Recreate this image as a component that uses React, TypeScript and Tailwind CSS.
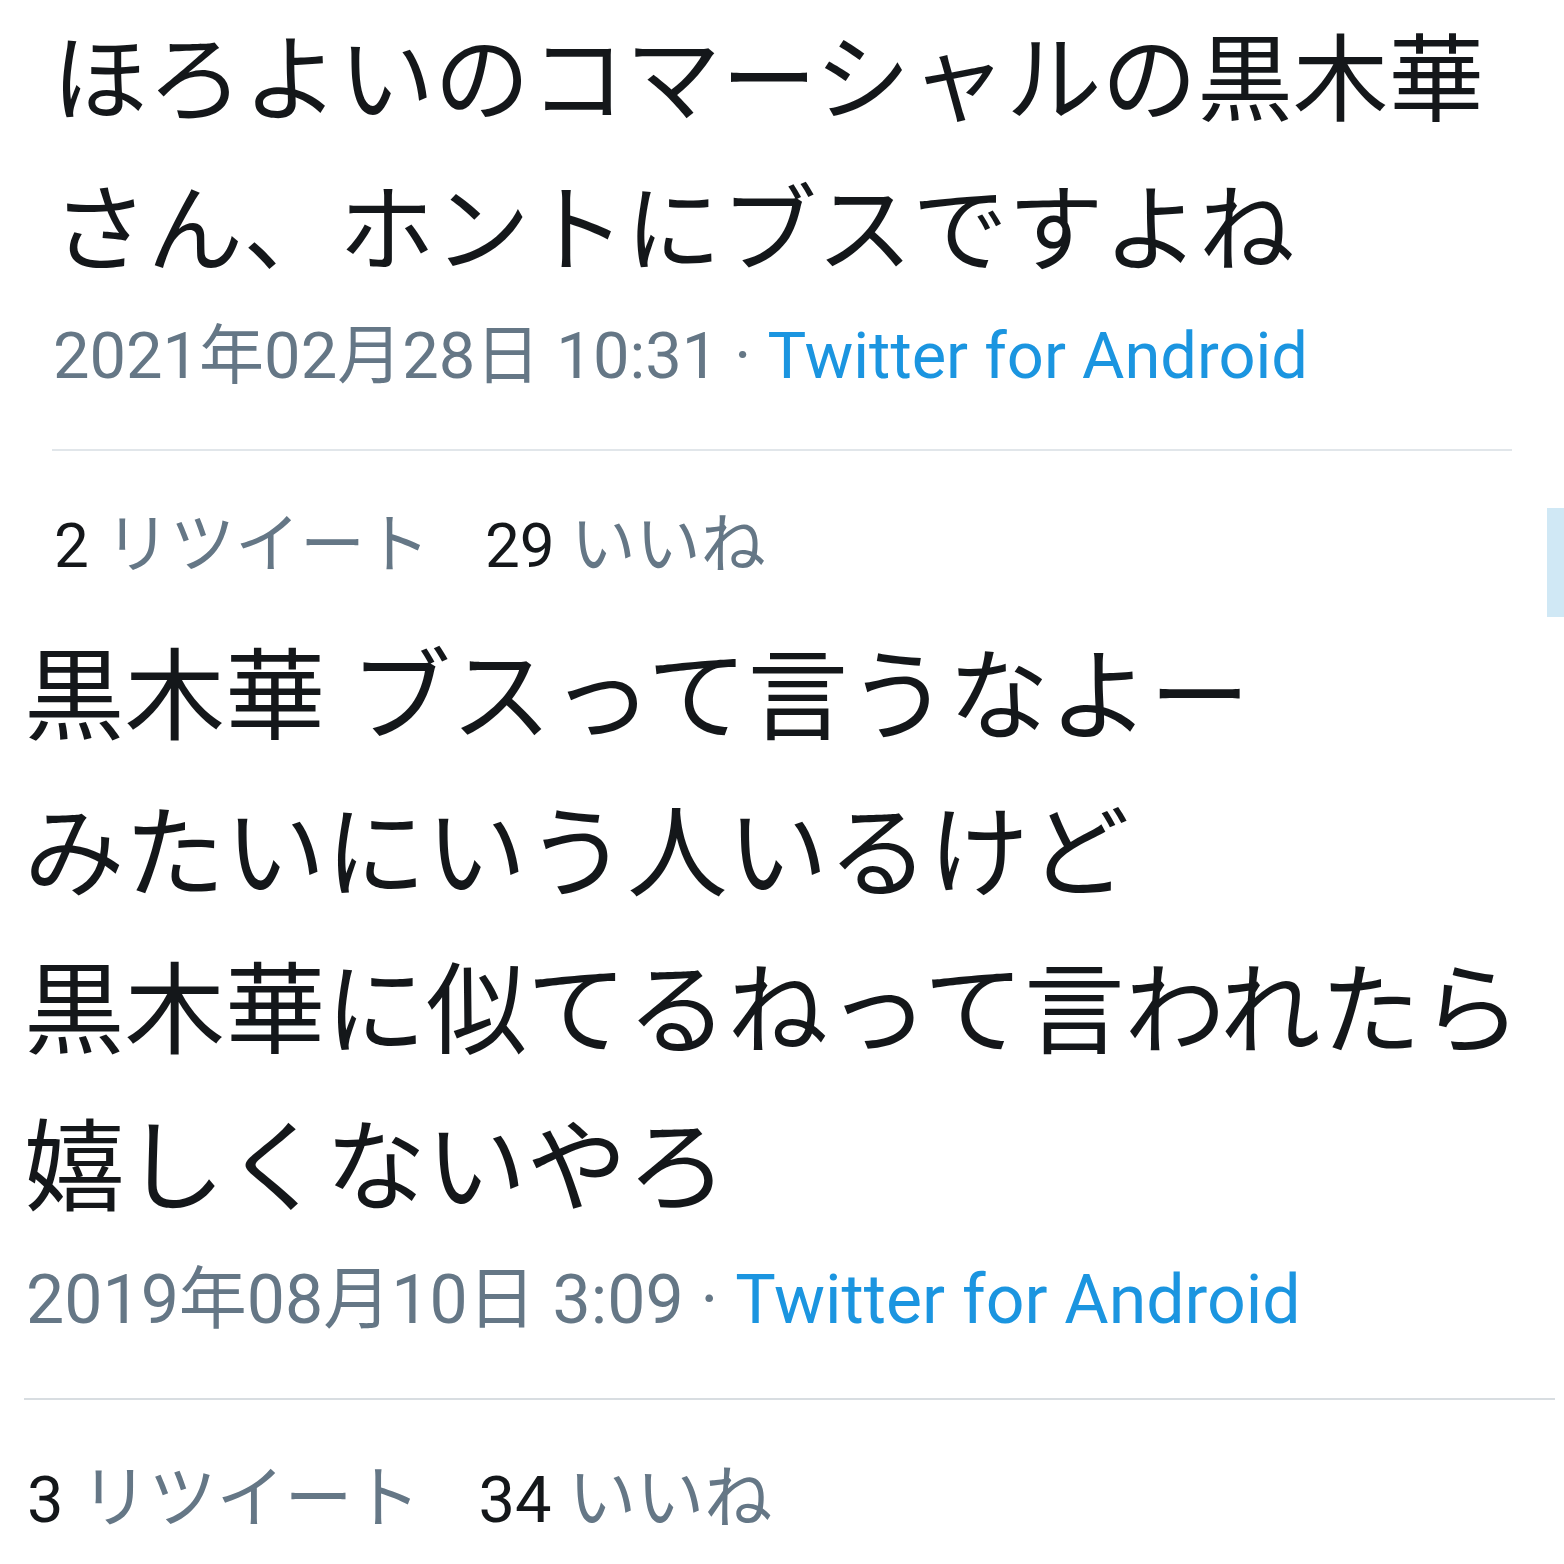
import React from 'react';

const FONT = "font-['Roboto','Noto_Sans_CJK_JP',sans-serif]";

interface Tweet {
  lines: string[];
  date: string;
  retweets: number;
  likes: number;
}

const Meta: React.FC<{ date: string; size: string }> = ({ date, size }) => (
  <div className={`${size} whitespace-nowrap`}>
    <span className="text-[#657786]">{date}</span>
    <span className="text-[#657786]"> · </span>
    <span className="text-[#1b95e0]">Twitter for Android</span>
  </div>
);

interface StatsProps {
  retweets: number;
  likes: number;
  num: string;
  label: string;
  gap: string;
}

const Stats: React.FC<StatsProps> = ({ retweets, likes, num, label, gap }) => (
  <div className={`flex items-baseline ${gap} h-[70px] leading-[70px] whitespace-nowrap`}>
    <div>
      <span className={`text-[#14171a] ${num}`}>{retweets}</span>
      <span className={`text-[#657786] ${label}`}> リツイート</span>
    </div>
    <div>
      <span className={`text-[#14171a] ${num}`}>{likes}</span>
      <span className={`text-[#657786] ${label}`}> いいね</span>
    </div>
  </div>
);

const first: Tweet = {
  lines: ['ほろよいのコマーシャルの黒木華', 'さん、ホントにブスですよね'],
  date: '2021年02月28日 10:31',
  retweets: 2,
  likes: 29,
};

const second: Tweet = {
  lines: ['黒木華 ブスって言うなよー', 'みたいにいう人いるけど', '黒木華に似てるねって言われたら', '嬉しくないやろ'],
  date: '2019年08月10日 3:09',
  retweets: 3,
  likes: 34,
};

export default function App() {
  return (
    <div className={`relative w-[1564px] h-[1564px] overflow-hidden bg-white ${FONT}`}>
      {/* scrollbar thumb */}
      <div className="absolute right-0 top-[508px] w-[17px] h-[109px] bg-[#d0e8f5]" />

      <div className="pl-[52px] pt-[6px]">
        <div className="text-[95.6px] leading-[150px] text-[#14171a] whitespace-nowrap">
          {first.lines.map((l) => (
            <div key={l}>{l}</div>
          ))}
        </div>
      </div>
      <div className="pl-[53px] mt-[10px]">
        <Meta date={first.date} size="text-[65px] leading-[80px]" />
      </div>
      <div className="ml-[52px] w-[1460px] h-[2px] bg-[#e1e6ea] mt-[53px]" />
      <div className="pl-[54px] mt-[59px]">
        <Stats
          retweets={first.retweets}
          likes={first.likes}
          num="text-[62px]"
          label="text-[65px]"
          gap="gap-[55px]"
        />
      </div>

      <div className="pl-[24px] mt-[40px]">
        <div className="text-[100.5px] leading-[157px] text-[#14171a] whitespace-nowrap">
          {second.lines.map((l) => (
            <div key={l}>{l}</div>
          ))}
        </div>
        <div className="mt-[10px] pl-[2px]">
          <Meta date={second.date} size="text-[68px] leading-[84px]" />
        </div>
      </div>
      <div className="ml-[24px] w-[1531px] h-[2px] bg-[#d8dde1] mt-[56px]" />
      <div className="pl-[27px] mt-[64px]">
        <Stats
          retweets={second.retweets}
          likes={second.likes}
          num="text-[65px]"
          label="text-[68px]"
          gap="gap-[58px]"
        />
      </div>
    </div>
  );
}
